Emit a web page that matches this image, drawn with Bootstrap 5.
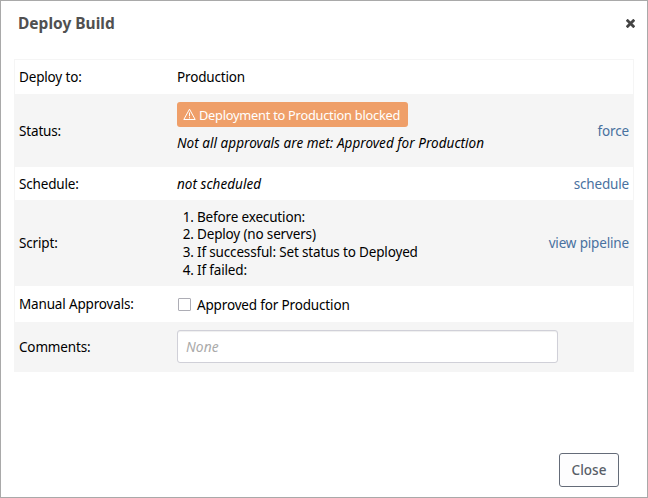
<!DOCTYPE html>
<html lang="en">
<head>
<meta charset="utf-8">
<title>Deploy Build</title>
<link href="https://cdn.jsdelivr.net/npm/bootstrap@5.3.0/dist/css/bootstrap.min.css" rel="stylesheet">
<style>
body{font-family:"Noto Sans","Open Sans",sans-serif;font-size:13.5px;line-height:18px;letter-spacing:-.16px;color:#000;background:#fff}
em{letter-spacing:.04px}
.dialog{width:648px;height:498px;border:1px solid #a9a9a9}
.dialog-title{font-size:15.5px;line-height:20px;color:#505050;letter-spacing:0}
.dialog-head{padding:12px 12px 0 17px;height:58px}
.close-x{margin-top:6px}
.props{margin:0 13px;border:1px solid #f5f5f5}
.prop{padding:0 4px}
.prop:nth-child(even){background:#f5f5f5}
.prop-name{width:158px}
.h-target{height:34px}.h-status{height:73px}.h-sched{height:33px}.h-script{height:86px}.h-appr{height:36px}.h-comm{height:49px}
.prop a{color:#49719f}
.blocked{background:#ef9f69;color:#fff;height:25px;width:231px;border-radius:3px;padding:0 6px;gap:3px;font-size:12.8px;letter-spacing:-.24px}
.blocked svg{flex:none}
.status-text{padding-bottom:7px}
.status-note{margin-top:7px}
.steps{padding:2px 0 0 20px;line-height:17.6px}
.prop .form-check-input{width:13px;height:13px;border:1px solid #adadb5;border-radius:1px;margin:0 6px 0 1px}
.approval{padding-top:1px}
.prop .form-control{width:381px;height:33px;border-color:#d0d0d8;border-radius:3px;padding:0 8px;font-size:13.8px;letter-spacing:.1px;box-shadow:inset 0 1px 1px #0001}
.form-control::placeholder{color:#aaa}
.dialog-foot{padding:0 28px 10px 0}
.dialog-foot .btn{width:60px;height:34px;padding:0;font-size:13.5px;color:#585e68;border:1px solid #646b78;border-radius:3px;background:#fdfdfe}
</style>
</head>
<body>
<main class="dialog d-flex flex-column">
  <header class="dialog-head d-flex justify-content-between align-items-start">
    <h1 class="dialog-title fw-bold m-0">Deploy Build</h1>
    <button class="close-x border-0 bg-transparent p-0 d-flex" aria-label="Close dialog"><svg width="9" height="9" viewBox="0 0 9 9"><path d="M1.7 1.7 7.3 7.3M7.3 1.7 1.7 7.3" stroke="#444" stroke-width="2.8" stroke-linecap="square"/></svg></button>
  </header>
  <section class="props">
    <div class="prop h-target d-flex align-items-center"><div class="prop-name">Deploy to:</div><div>Production</div></div>
    <div class="prop h-status d-flex align-items-center">
      <div class="prop-name">Status:</div>
      <div class="status-text flex-grow-1">
        <div class="blocked d-flex align-items-center"><svg width="13" height="13" viewBox="0 0 13 13" fill="none" stroke="#fff"><path d="M6.5 1.2.8 11.5h11.4z"/><path d="M6.5 4.5v3.8M6.5 9.2v1.2"/></svg><span class="text-nowrap">Deployment to Production blocked</span></div>
        <em class="status-note d-block">Not all approvals are met: Approved for Production</em>
      </div>
      <a href="#" class="text-decoration-none">force</a>
    </div>
    <div class="prop h-sched d-flex align-items-center"><div class="prop-name">Schedule:</div><em class="flex-grow-1">not scheduled</em><a href="#" class="text-decoration-none">schedule</a></div>
    <div class="prop h-script d-flex align-items-center">
      <div class="prop-name">Script:</div>
      <ol class="steps flex-grow-1 mb-0"><li>Before execution:</li><li>Deploy (no servers)</li><li>If successful: Set status to Deployed</li><li>If failed:</li></ol>
      <a href="#" class="text-decoration-none">view pipeline</a>
    </div>
    <div class="prop h-appr d-flex align-items-center"><div class="prop-name">Manual Approvals:</div><label class="approval d-flex align-items-center"><input type="checkbox" class="form-check-input">Approved for Production</label></div>
    <div class="prop h-comm d-flex align-items-center"><div class="prop-name">Comments:</div><input type="text" class="form-control fst-italic" placeholder="None"></div>
  </section>
  <footer class="dialog-foot mt-auto d-flex justify-content-end"><button class="btn fw-medium">Close</button></footer>
</main>
<script src="https://cdn.jsdelivr.net/npm/bootstrap@5.3.0/dist/js/bootstrap.bundle.min.js"></script>
</body>
</html>
